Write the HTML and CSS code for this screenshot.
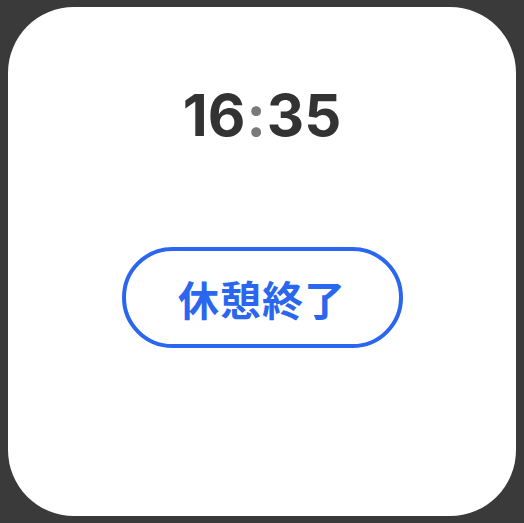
FILE: index.html
```html
<!DOCTYPE html>
<html lang="ja">
<head>
<meta charset="utf-8">
<link rel="stylesheet" href="styles.css">
</head>
<body>
<div class="card">
  <div class="time"><span>16</span><span class="colon">:</span><span>35</span></div>
  <button class="end">休憩終了</button>
</div>
</body>
</html>
```
FILE: styles.css
```css
html, body {
  margin: 0;
  padding: 0;
  background: #3a3a3a;
}
body {
  width: 524px;
  height: 523px;
  padding: 7px 8px;
  box-sizing: border-box;
}
.card {
  width: 508px;
  height: 509px;
  background: #ffffff;
  border-radius: 66px;
  display: flex;
  flex-direction: column;
  align-items: center;
  padding-top: 74px;
  box-sizing: border-box;
}
.time {
  font-family: Inter, "Liberation Sans", sans-serif;
  font-weight: 700;
  font-size: 58px;
  line-height: 68px;
  color: #333333;
  letter-spacing: 0;
}
.colon {
  color: #7a7a7a;
  margin: 0 1px;
}
.end {
  margin-top: 98px;
  width: 281px;
  height: 101px;
  border: 4px solid #2a66ef;
  border-radius: 51px;
  background: #ffffff;
  color: #2a66ef;
  font-family: "Noto Sans CJK JP", sans-serif;
  font-weight: 700;
  font-size: 41px;
  letter-spacing: 1px;
  padding: 0;
  box-sizing: border-box;
}
```
